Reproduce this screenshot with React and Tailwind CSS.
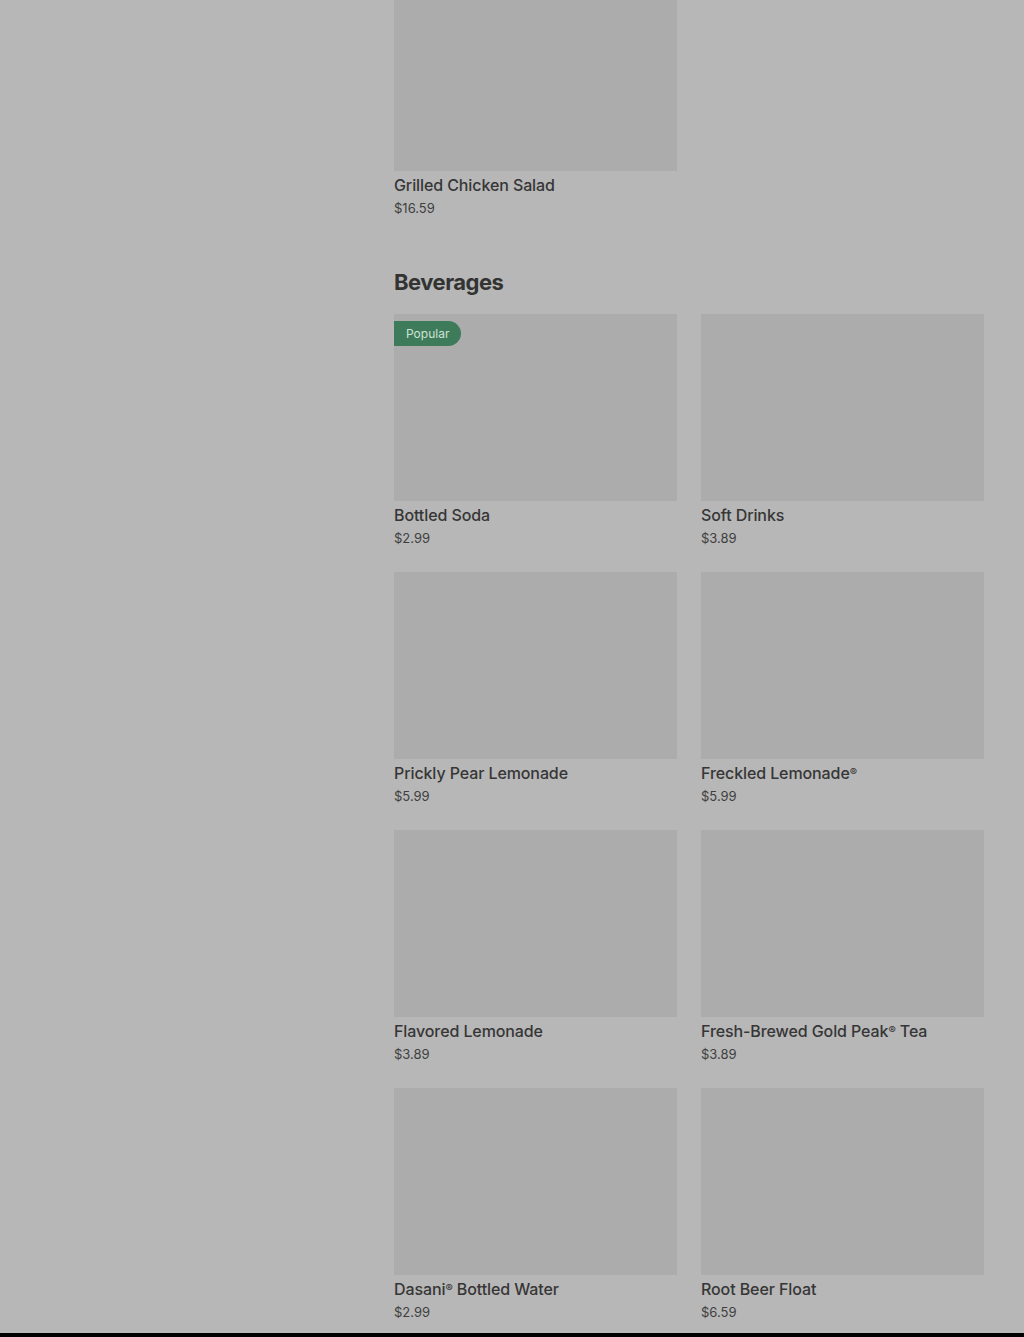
const BEVERAGES = [
  { name: 'Bottled Soda', price: '$2.99', popular: true },
  { name: 'Soft Drinks', price: '$3.89' },
  { name: 'Prickly Pear Lemonade', price: '$5.99' },
  { name: 'Freckled Lemonade®', price: '$5.99' },
  { name: 'Flavored Lemonade', price: '$3.89' },
  { name: 'Fresh-Brewed Gold Peak® Tea', price: '$3.89' },
  { name: 'Dasani® Bottled Water', price: '$2.99' },
  { name: 'Root Beer Float', price: '$6.59' },
];

// small raised ® like the source font renders it
function ItemName({ text }) {
  const parts = text.split('®');
  return parts.map((p, i) => (
    <span key={i}>
      {p}
      {i < parts.length - 1 && <span className="relative -top-[3px] text-[11px] leading-none">®</span>}
    </span>
  ));
}

function MenuItem({ name, price, popular, imgClass = 'h-[187px]' }) {
  return (
    <div className="flex flex-col">
      <div className={`relative bg-[#acacac] ${imgClass}`}>
        {popular && (
          <span className="absolute left-0 top-[7px] h-[25px] pl-3 pr-3 flex items-center rounded-r-full bg-[#3e7b5a] text-[#cfe2d6] text-[12px] leading-none">
            Popular
          </span>
        )}
      </div>
      <div className="mt-[2px] h-6 text-[16px] leading-6 font-medium tracking-[-0.1px] text-[#363636]">
        <ItemName text={name} />
      </div>
      <div className="mt-[1px] text-[13px] leading-5 text-[#3f3f3f]">{price}</div>
    </div>
  );
}

export default function App() {
  return (
    <div className="min-h-[1337px] bg-[#b7b7b7] flex flex-col" style={{ fontFamily: 'Inter, "Noto Sans", sans-serif' }}>
      <div className="flex-1 pl-[394px] pr-[40px] pb-[11px]">
        <div className="grid grid-cols-2 gap-x-6">
          <MenuItem name="Grilled Chicken Salad" price="$16.59" imgClass="h-[171px]" />
        </div>
        <h2 className="mt-[50px] mb-[18px] text-[22px] leading-7 font-bold tracking-[-0.5px] text-[#333]">Beverages</h2>
        <div className="grid grid-cols-2 gap-x-6 gap-y-6">
          {BEVERAGES.map((b) => (
            <MenuItem key={b.name} {...b} />
          ))}
        </div>
      </div>
      <div className="h-[4px] bg-black" />
    </div>
  );
}
